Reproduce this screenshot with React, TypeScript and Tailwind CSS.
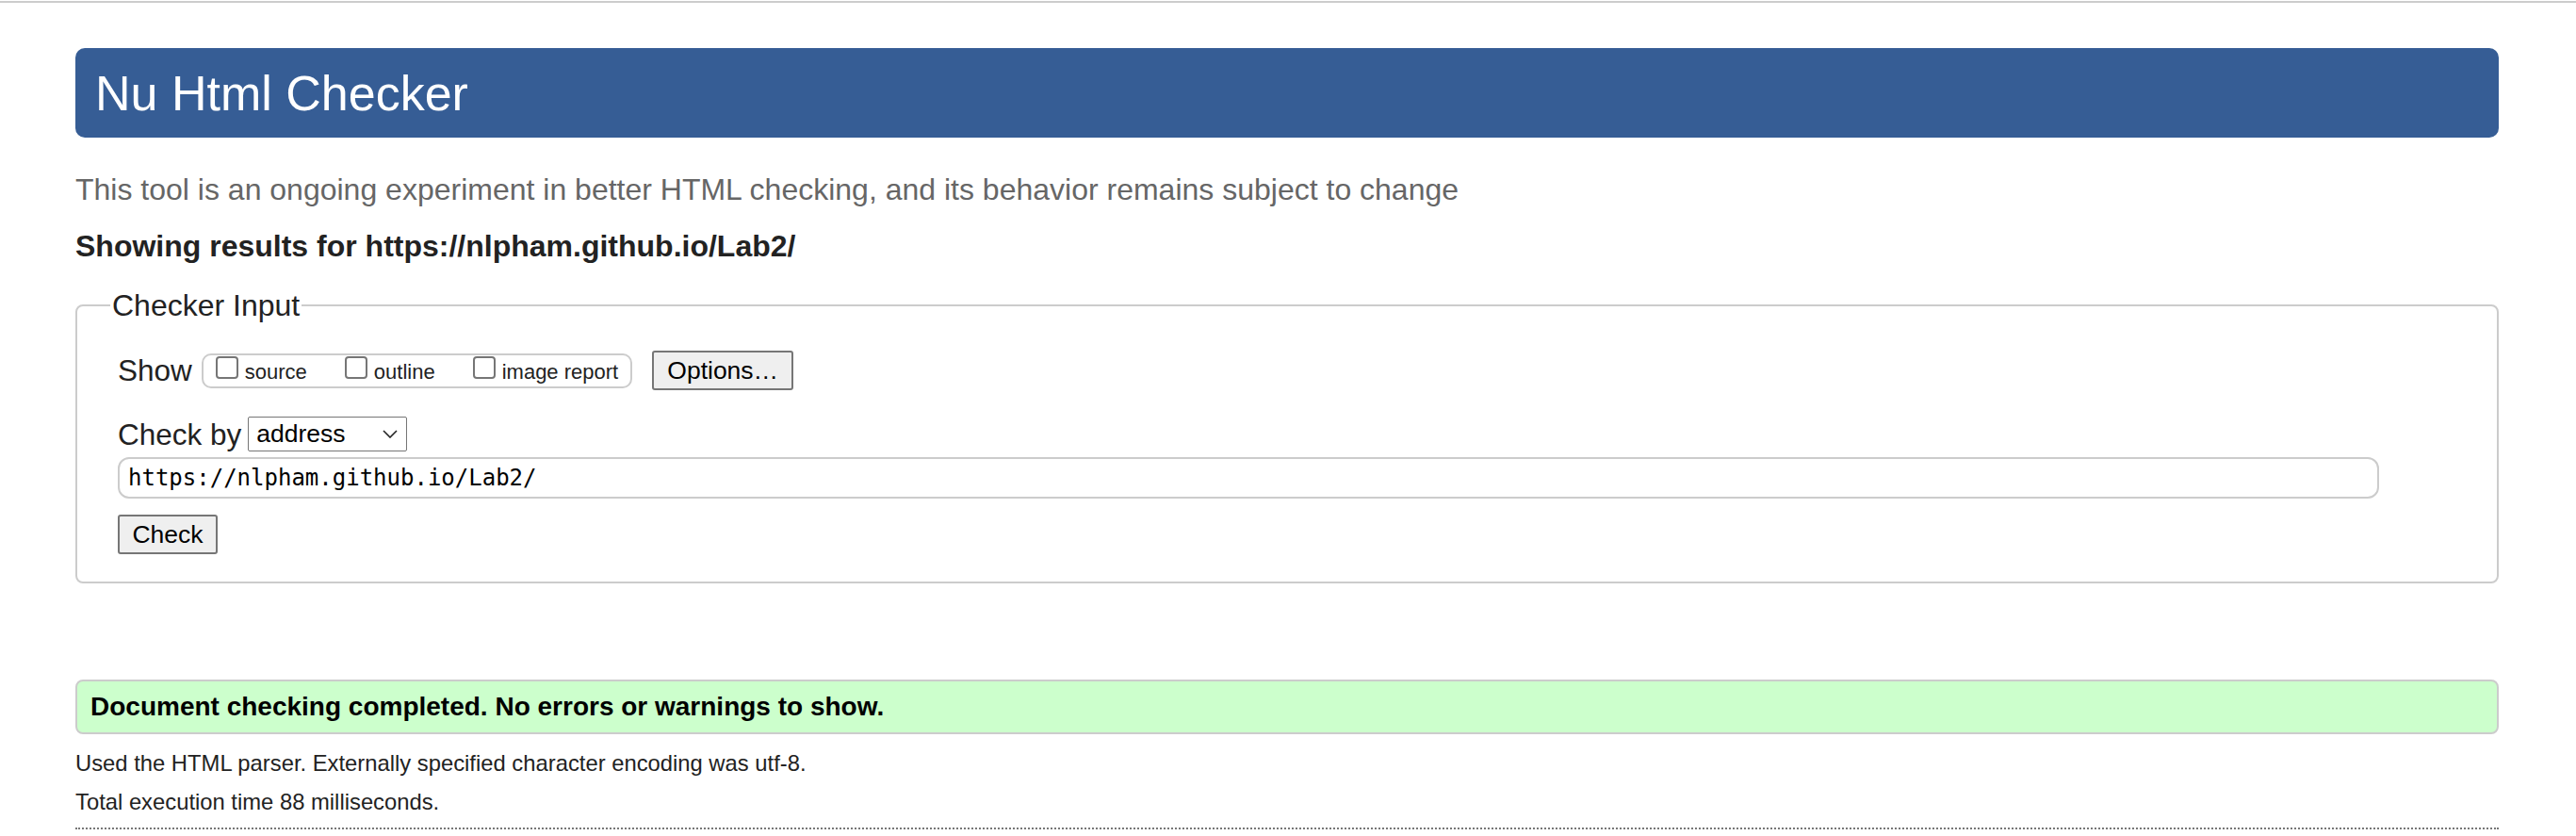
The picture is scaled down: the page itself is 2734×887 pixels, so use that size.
import React from "react";

// --- small pieces of the checker form ---
const Checkbox = () => (
  <span className="inline-block w-[24px] h-[24px] mr-[7px] rounded-[4px] border-2 border-[#767676] bg-white" />
);

const ShowOption = ({ label, first }: { label: string; first?: boolean }) => (
  <label className={`inline-flex items-baseline ${first ? "" : "ml-[40px]"}`}>
    <Checkbox />
    <span className="text-[22px] leading-[1.15] text-[#222]">{label}</span>
  </label>
);

const Chevron = () => (
  <svg width="16" height="9" viewBox="0 0 16 9" fill="none">
    <polyline points="1,1 8,8 15,1" stroke="#222" strokeWidth="1.6" />
  </svg>
);

export default function App() {
  return (
    <div className="bg-white font-['Liberation_Sans',Arial,sans-serif] text-[#222] min-h-[887px]">
      {/* top rule */}
      <div className="mt-px h-[2px] bg-[#cccccc]" />

      <div className="pl-[80px] pr-[82px] flex flex-col">
        {/* --- HEADER --- */}
        <div className="mt-[48px] h-[95px] rounded-[10px] bg-[#365d95] flex items-center pl-[21px]">
          <h1 className="text-[52px] leading-none text-white">Nu Html Checker</h1>
        </div>

        <p className="mt-[35px] text-[32px] leading-[40px] text-[#666]">
          This tool is an ongoing experiment in better HTML checking, and its behavior remains subject to change
        </p>

        <p className="mt-[20px] text-[32px] leading-[40px] font-bold text-[#222]">
          Showing results for https://nlpham.github.io/Lab2/
        </p>

        {/* --- CHECKER INPUT --- */}
        <fieldset className="mt-[25px] border-2 border-[#cccccc] rounded-[8px] pl-[43px] pr-[40px] pt-[30px] pb-[29px]">
          <legend className="ml-[-8px] px-[2px] text-[32px] leading-[36px] text-[#222]">Checker Input</legend>

          <div className="flex items-center h-[42px]">
            <span className="text-[31.5px] leading-[36px] mr-[10px]">Show</span>
            <div className="flex items-center h-[37px] px-[13px] border-2 border-[#cccccc] rounded-[10px]">
              <ShowOption label="source" first />
              <ShowOption label="outline" />
              <ShowOption label="image report" />
            </div>
            <button className="ml-[21px] w-[150px] h-[42px] bg-[#efefef] border-2 border-[#767676] rounded-[3px] text-[26.5px] text-black">
              Options…
            </button>
          </div>

          <div className="mt-[28px] flex items-center h-[37px]">
            <span className="text-[31.5px] leading-[36px] mr-[7px]">Check by</span>
            <div className="w-[169px] h-[37px] flex items-center justify-between pl-[8px] pr-[9px] border-[1.5px] border-[#767676] rounded-[2px] bg-white">
              <span className="text-[26.5px] leading-none text-black">address</span>
              <Chevron />
            </div>
          </div>

          <div className="mt-[6px] w-[2400px] h-[44px] flex items-center pl-[9px] border-2 border-[#cccccc] rounded-[12px]">
            <span className="font-['DejaVu_Sans_Mono',monospace] text-[24px] leading-none text-black">
              https://nlpham.github.io/Lab2/
            </span>
          </div>

          <button className="mt-[17px] w-[106px] h-[42px] bg-[#efefef] border-2 border-[#767676] rounded-[3px] text-[26.5px] text-black">
            Check
          </button>
        </fieldset>

        {/* --- RESULTS --- */}
        <div className="mt-[102px] h-[58px] flex items-center pl-[14px] bg-[#ccffcc] border-2 border-[#cccccc] rounded-[8px]">
          <span className="text-[28px] font-bold text-black">Document checking completed. No errors or warnings to show.</span>
        </div>

        <p className="mt-[17px] text-[23.8px] leading-[1.15]">Used the HTML parser. Externally specified character encoding was utf-8.</p>
        <p className="mt-[14px] text-[23.8px] leading-[1.15]">Total execution time 88 milliseconds.</p>

        <div className="mt-[13px] border-t-2 border-dotted border-[#777]" />
      </div>
    </div>
  );
}
